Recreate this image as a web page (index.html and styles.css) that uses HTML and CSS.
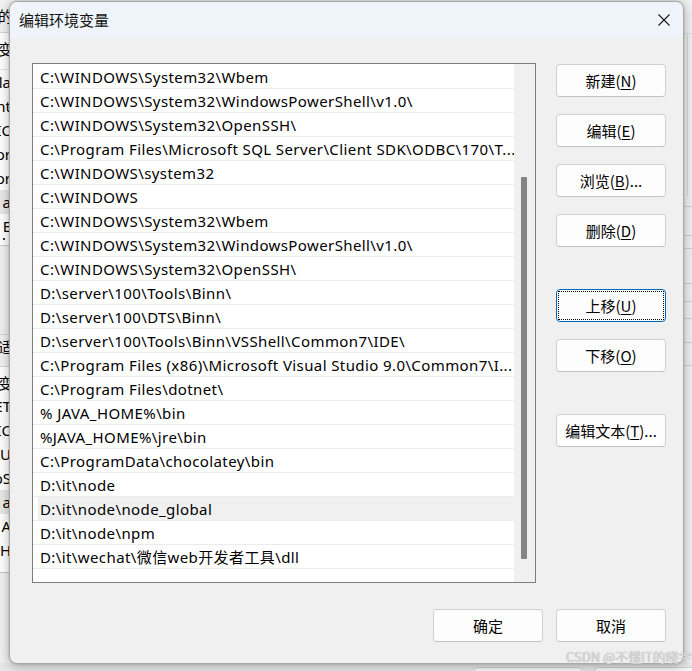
FILE: index.html
```html
<!DOCTYPE html>
<html lang="zh-CN">
<head>
<meta charset="utf-8">
<title>编辑环境变量</title>
<link rel="stylesheet" href="styles.css">
</head>
<body>
<div class="parent">
  <div class="parent-main">
    <div class="strip-left">
      <div class="pl-head"><span class="frag cjk">的</span></div>
      <div class="pl-colhead"><span class="frag cjk">变</span></div>
      <div class="pl-list pl-list-a">
        <div class="pl-row"><span class="frag">la</span></div>
        <div class="pl-row"><span class="frag">nt</span></div>
        <div class="pl-row"><span class="frag">IC</span></div>
        <div class="pl-row"><span class="frag">or</span></div>
        <div class="pl-row"><span class="frag">or</span></div>
        <div class="pl-row sel"><span class="frag">a</span></div>
        <div class="pl-row"><span class="frag">E</span></div>
        <div class="pl-row cut"><span class="dot"></span></div>
      </div>
      <div class="pl-gap"></div>
      <div class="pl-label"><span class="frag cjk">适</span></div>
      <div class="pl-colhead2"><span class="frag cjk">变</span></div>
      <div class="pl-list pl-list-b">
        <div class="pl-row"><span class="frag">ET</span></div>
        <div class="pl-row"><span class="frag">IC</span></div>
        <div class="pl-row"><span class="frag">IU</span></div>
        <div class="pl-row"><span class="frag">oS</span></div>
        <div class="pl-row sel"><span class="frag">a</span></div>
        <div class="pl-row"><span class="frag">A</span></div>
        <div class="pl-row"><span class="frag">H</span></div>
        <div class="pl-row cut"><span class="frag">p</span></div>
      </div>
    </div>
    <div class="parent-fill"></div>
    <div class="strip-right">
      <div class="pr-top"></div>
      <div class="pr-vline"></div>
      <div class="pr-lines">
        <div class="pr-l h11"></div>
        <div class="pr-l h29"></div>
        <div class="pr-l h13"></div>
        <div class="pr-l h35"></div>
        <div class="pr-l h18"></div>
        <div class="pr-l h17"></div>
        <div class="pr-l h24"></div>
        <div class="pr-l h23"></div>
      </div>
    </div>
  </div>
  <div class="parent-bottom">
    <div class="pb-btn"></div>
    <div class="pb-btn"></div>
  </div>
</div>

<div class="dialog">
  <div class="titlebar">
    <span class="title">编辑环境变量</span>
    <svg class="close" width="12" height="12" viewBox="0 0 12 12" aria-hidden="true">
      <path d="M0.5 0.5 L11.5 11.5 M11.5 0.5 L0.5 11.5" stroke="#1b1b1b" stroke-width="1.1" fill="none"/>
    </svg>
  </div>
  <div class="body">
    <div class="listbox">
      <div class="rows">
        <div class="row">C:\WINDOWS\System32\Wbem</div>
        <div class="row">C:\WINDOWS\System32\WindowsPowerShell\v1.0\</div>
        <div class="row">C:\WINDOWS\System32\OpenSSH\</div>
        <div class="row">C:\Program Files\Microsoft SQL Server\Client SDK\ODBC\170\T...</div>
        <div class="row">C:\WINDOWS\system32</div>
        <div class="row">C:\WINDOWS</div>
        <div class="row">C:\WINDOWS\System32\Wbem</div>
        <div class="row">C:\WINDOWS\System32\WindowsPowerShell\v1.0\</div>
        <div class="row">C:\WINDOWS\System32\OpenSSH\</div>
        <div class="row">D:\server\100\Tools\Binn\</div>
        <div class="row">D:\server\100\DTS\Binn\</div>
        <div class="row">D:\server\100\Tools\Binn\VSShell\Common7\IDE\</div>
        <div class="row">C:\Program Files (x86)\Microsoft Visual Studio 9.0\Common7\I...</div>
        <div class="row">C:\Program Files\dotnet\</div>
        <div class="row">% JAVA_HOME%\bin</div>
        <div class="row">%JAVA_HOME%\jre\bin</div>
        <div class="row">C:\ProgramData\chocolatey\bin</div>
        <div class="row">D:\it\node</div>
        <div class="row hover">D:\it\node\node_global</div>
        <div class="row">D:\it\node\npm</div>
        <div class="row">D:\it\wechat\微信web开发者工具\dll</div>
      </div>
      <div class="scrollbar"><div class="thumb"></div></div>
    </div>
    <div class="side">
      <div class="btn">新建(<u>N</u>)</div>
      <div class="btn">编辑(<u>E</u>)</div>
      <div class="btn">浏览(<u>B</u>)...</div>
      <div class="btn">删除(<u>D</u>)</div>
      <div class="btn focus gap-big">上移(<u>U</u>)</div>
      <div class="btn">下移(<u>O</u>)</div>
      <div class="btn gap-big">编辑文本(<u>T</u>)...</div>
    </div>
  </div>
  <div class="footer">
    <div class="btn">确定</div>
    <div class="btn">取消</div>
  </div>
</div>

<div class="watermark">CSDN @不懂IT的晓宇</div>
</body>
</html>
```
FILE: styles.css
```css
html, body {
  margin: 0;
  padding: 0;
}
body {
  width: 692px;
  height: 671px;
  overflow: hidden;
  position: relative;
  background: #f0f0f0;
  font-family: "Noto Sans", "Noto Sans CJK SC", sans-serif;
  font-size: 15px;
  color: #000;
}

/* ---------- parent window behind ---------- */
.parent {
  width: 692px;
  height: 671px;
  display: flex;
  flex-direction: column;
  background: #f0f0f0;
}
.parent-main {
  height: 663px;
  display: flex;
}
.strip-left {
  width: 14px;
  display: flex;
  flex-direction: column;
  overflow: hidden;
}
.frag {
  display: block;
  width: 11px;
  text-align: right;
  white-space: nowrap;
  direction: rtl;
  line-height: 24px;
}
.frag.cjk {
  width: 13px;
  font-family: "Noto Sans CJK SC", sans-serif;
}
.pl-head {
  height: 33px;
  background: #f3f3f3;
  border-bottom: 1px solid #d6d6d6;
  padding-top: 4px;
  box-sizing: border-box;
}
.pl-colhead {
  height: 37px;
  background: #fff;
  border-bottom: 1px solid #e6e6e6;
  padding-top: 4px;
  box-sizing: border-box;
}
.pl-list {
  background: #fff;
  display: flex;
  flex-direction: column;
}
.pl-list-a { height: 175px; border-bottom: 1px solid #c8c8c8; }
.pl-list-b { height: 178px; border-bottom: 1px solid #c8c8c8; }
.pl-row {
  height: 24px;
  flex: none;
  overflow: hidden;
}
.pl-row.sel { background: #e8e8e8; }
.pl-row.cut { height: 7px; }
.dot {
  display: block;
  width: 2px;
  height: 2px;
  margin: 0 0 0 3px;
  background: #333;
}
.pl-gap {
  height: 88px;
  border-bottom: 1px solid #d6d6d6;
}
.pl-label {
  height: 32px;
  border-bottom: 1px solid #d6d6d6;
  box-sizing: border-box;
}
.pl-colhead2 {
  height: 27px;
  background: #fff;
  box-sizing: border-box;
  padding-top: 4px;
}
.parent-fill { flex: 1; }
.strip-right {
  width: 8px;
  display: flex;
  flex-direction: column;
  position: relative;
}
.pr-top {
  height: 33px;
  border-bottom: 1px solid #dcdcdc;
}
.pr-vline {
  height: 162px;
  margin-left: 3px;
  width: 1px;
  background: #d8d8d8;
}
.pr-l {
  border-bottom: 1px solid #d2d2d2;
  box-sizing: border-box;
}
.h11 { height: 11px; }
.h29 { height: 29px; }
.h13 { height: 13px; }
.h35 { height: 35px; }
.h18 { height: 18px; }
.h17 { height: 17px; }
.h24 { height: 24px; }
.h23 { height: 23px; }
.parent-bottom {
  height: 8px;
  display: flex;
  gap: 11px;
  padding: 4px 0 0 473px;
  box-sizing: border-box;
  background: #e8e8e8;
}
.pb-btn {
  width: 110px;
  height: 20px;
  flex: none;
  border: 1px solid #cfcfcf;
  border-radius: 4px;
  background: #f7f7f7;
  box-sizing: border-box;
}

/* ---------- dialog ---------- */
.dialog {
  position: absolute;
  left: 9px;
  top: 1px;
  width: 675px;
  height: 663px;
  box-sizing: border-box;
  border: 1px solid #a9a9a9;
  border-radius: 8px;
  background: #f0f0f0;
  overflow: hidden;
  display: flex;
  flex-direction: column;
  box-shadow: 0 2px 12px rgba(0, 0, 0, 0.30), 0 0 2px rgba(0, 0, 0, 0.2);
}
.titlebar {
  height: 36px;
  flex: none;
  display: flex;
  align-items: center;
  justify-content: space-between;
  padding: 0 13px 0 9px;
  background: #eef4f9;
}
.title {
  font-family: "Noto Sans CJK SC", sans-serif;
  font-size: 15px;
  line-height: 20px;
  color: #111;
}
.close {
  display: block;
  margin-top: -1px;
}
.body {
  display: flex;
  gap: 20px;
  padding: 25px 17px 0 22px;
}
.listbox {
  width: 504px;
  height: 520px;
  box-sizing: border-box;
  border: 1px solid #7c7c7c;
  background: #fff;
  display: flex;
  flex: none;
}
.rows {
  width: 481px;
  padding-top: 1px;
  flex: none;
}
.row {
  height: 24px;
  box-sizing: border-box;
  border-bottom: 1px solid #ececec;
  padding: 2px 0 0 7px;
  line-height: 20px;
  white-space: nowrap;
  overflow: hidden;
  letter-spacing: 0.4px;
}
.row.hover {
  background: linear-gradient(90deg, #fff 5px, #f0f0f0 5px);
}
.scrollbar {
  width: 21px;
  background: #f0f0f0;
  flex: none;
}
.thumb {
  width: 6px;
  height: 382px;
  margin: 113px 0 0 7px;
  background: #858585;
  border-radius: 1px;
}
.side {
  width: 110px;
  flex: none;
  display: flex;
  flex-direction: column;
  gap: 17px;
  padding-top: 1px;
}
.btn {
  width: 110px;
  height: 33px;
  flex: none;
  box-sizing: border-box;
  border: 1px solid #d1d1d1;
  border-bottom-color: #c2c2c2;
  border-radius: 4px;
  background: #fdfdfd;
  display: flex;
  align-items: center;
  justify-content: center;
  font-family: "Noto Sans CJK SC", sans-serif;
  font-size: 15px;
  line-height: 20px;
  color: #000;
  position: relative;
}
.btn u {
  text-decoration: underline;
  text-underline-offset: 2px;
  text-decoration-thickness: 1px;
}
.btn.gap-big {
  margin-top: 25px;
}
.btn.focus {
  border-color: #0067c0;
}
.btn.focus::after {
  content: "";
  position: absolute;
  inset: 1px;
  border: 1px dotted #000;
}
.footer {
  display: flex;
  justify-content: flex-end;
  gap: 13px;
  padding: 26px 17px 0 0;
}

/* ---------- watermark ---------- */
.watermark {
  position: absolute;
  left: 566px;
  top: 648px;
  font-family: "Noto Sans CJK SC", sans-serif;
  font-size: 13px;
  line-height: 18px;
  color: #dadada;
  text-shadow: 0 0 1px #9a9a9a;
  white-space: nowrap;
}
```
